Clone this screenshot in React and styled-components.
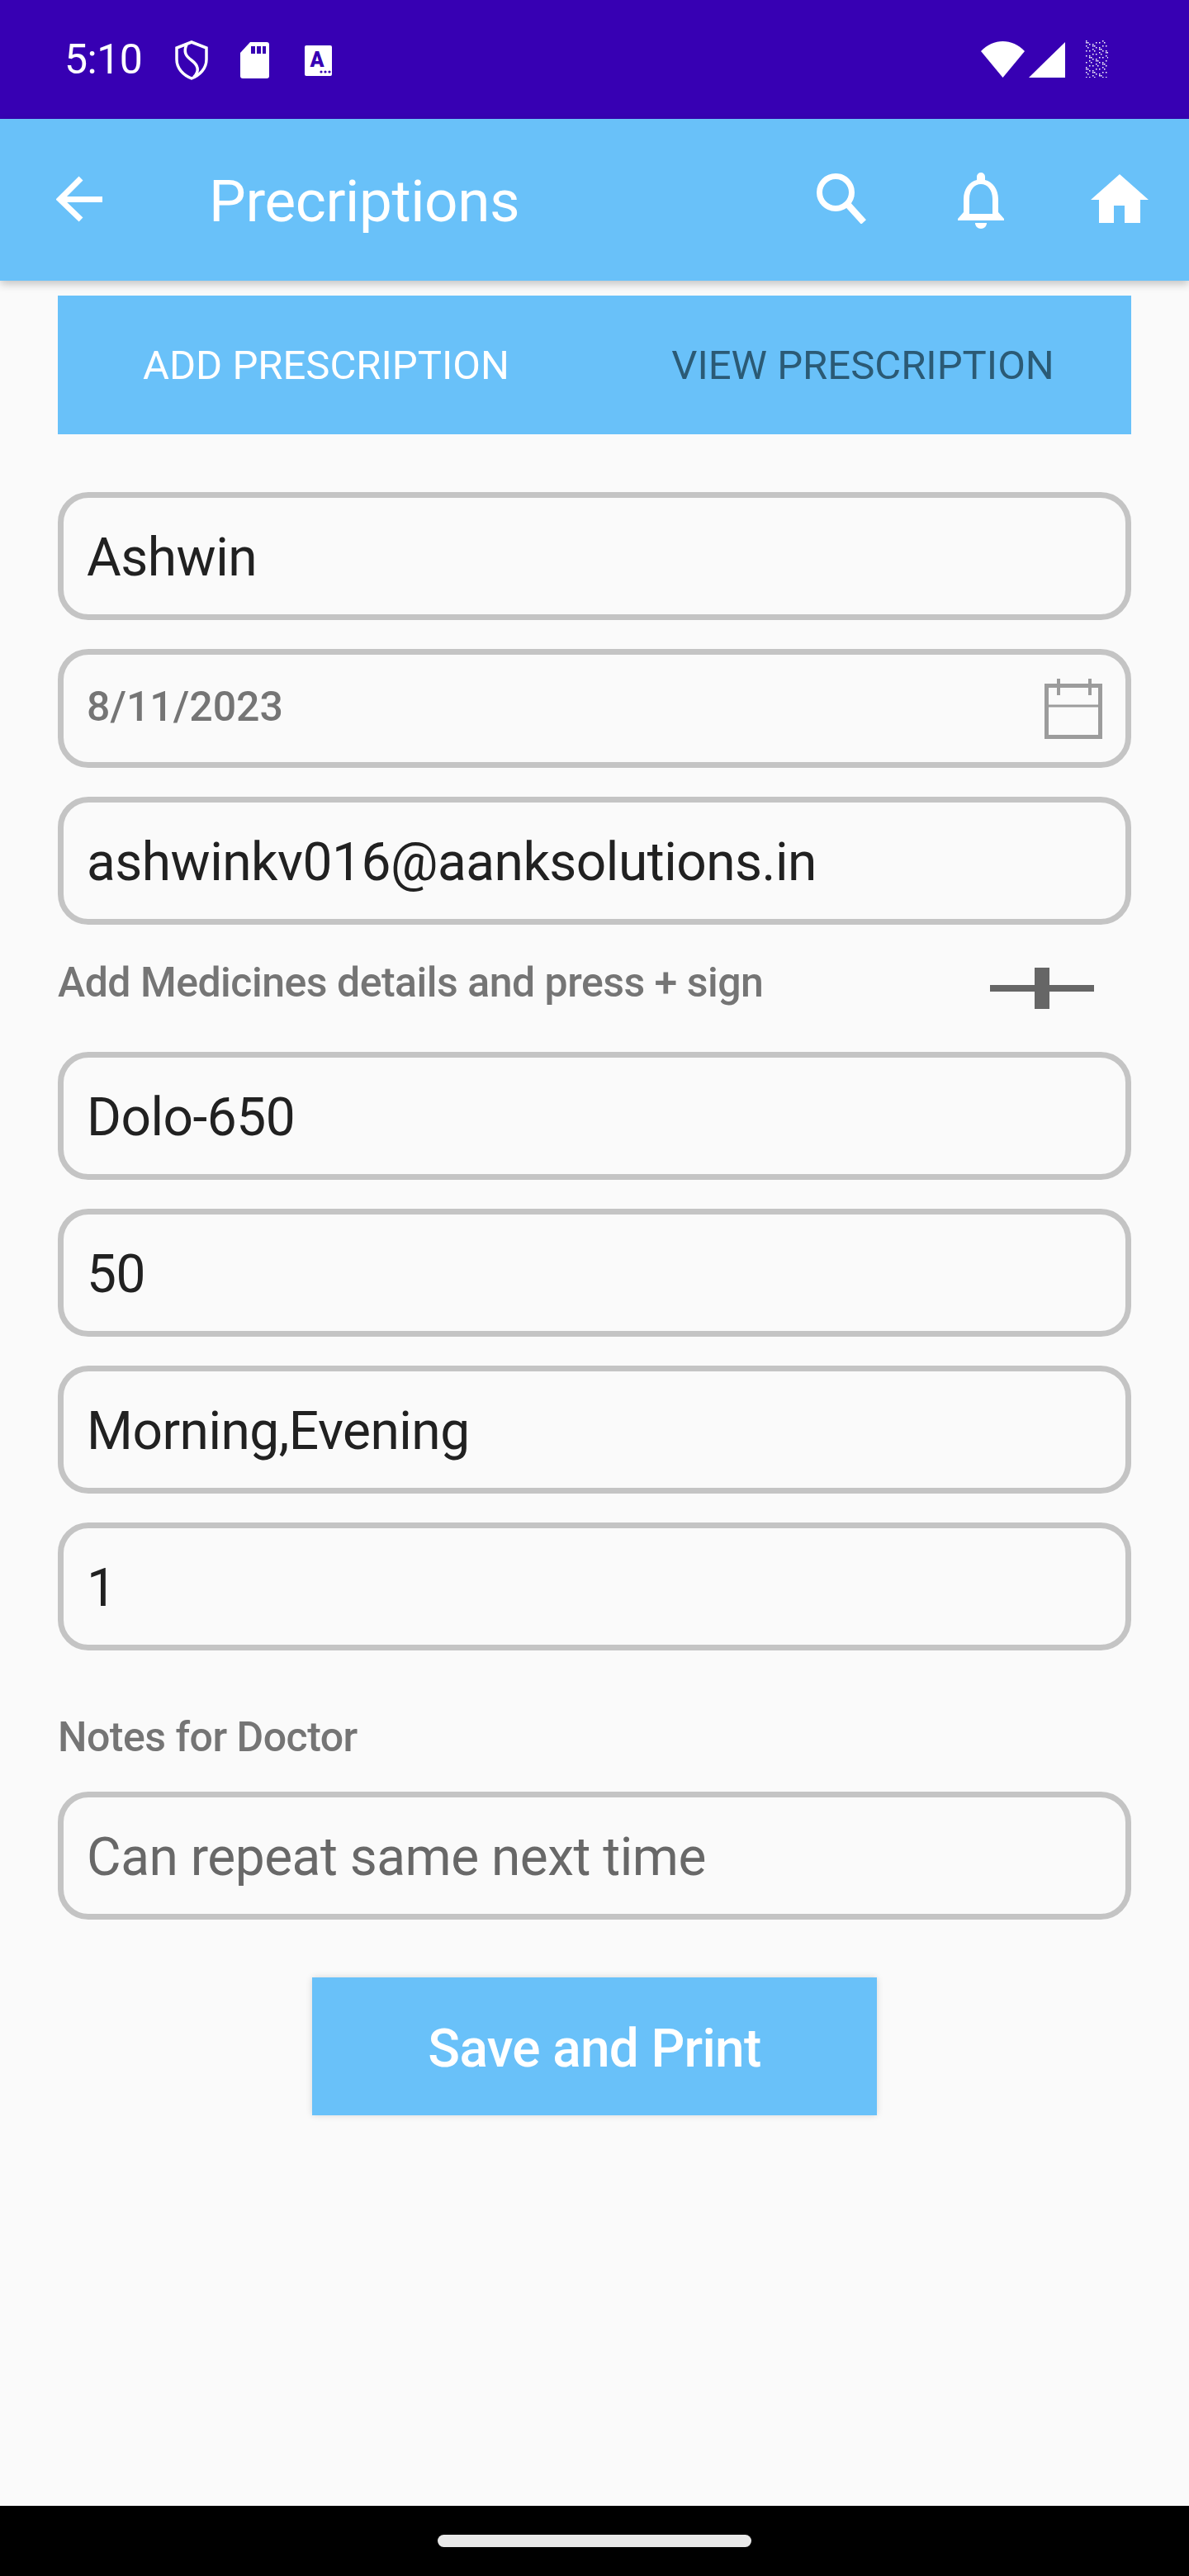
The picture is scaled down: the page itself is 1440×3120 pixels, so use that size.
import styled, { createGlobalStyle } from 'styled-components';

const GlobalStyle = createGlobalStyle`
  html, body {
    margin: 0;
    padding: 0;
    background: #fafafa;
    font-family: Roboto, "Noto Sans", sans-serif;
  }
`;

const Screen = styled.div`
  width: 1440px;
  height: 3120px;
  display: flex;
  flex-direction: column;
  background: #fafafa;
  overflow: hidden;
`;

const StatusBar = styled.div`
  height: 144px;
  flex: none;
  display: flex;
  align-items: flex-start;
  background: #3700b3;
  color: #fff;
`;

const Clock = styled.span`
  margin: 43px 0 0 78px;
  width: 134px;
  font-size: 50px;
  line-height: 58px;
  letter-spacing: -0.5px;
`;

const StatusIcon = styled.svg`
  flex: none;
  display: block;
  margin-top: ${(p) => p.$top}px;
  margin-left: ${(p) => p.$left}px;
`;

const AppBar = styled.header`
  height: 196px;
  flex: none;
  display: flex;
  align-items: flex-start;
  background: #69c1f9;
  box-shadow: 0 4px 10px rgba(0, 0, 0, 0.22);
  color: #fff;
  position: relative;
  z-index: 1;
`;

const BarIcon = styled.svg`
  flex: none;
  display: block;
  margin-top: ${(p) => p.$top}px;
  margin-left: ${(p) => p.$left}px;
`;

const Title = styled.h1`
  margin: 0 0 0 129px;
  width: 736px;
  flex: none;
  font-size: 71px;
  line-height: 100px;
  padding-top: 50px;
  font-weight: 400;
  letter-spacing: -0.4px;
`;

const Main = styled.main`
  flex: 1;
  padding: 18px 70px 0;
  display: flex;
  flex-direction: column;
`;

const Tabs = styled.nav`
  height: 168px;
  flex: none;
  display: grid;
  grid-template-columns: 1fr 1fr;
  background: #69c1f9;
  margin-bottom: 70px;
`;

const Tab = styled.div`
  display: flex;
  align-items: center;
  justify-content: center;
  font-size: 49px;
  color: ${(p) => (p.$active ? '#ffffff' : '#2b5a75')};
`;

const Field = styled.div`
  box-sizing: border-box;
  height: ${(p) => p.$height || 155}px;
  flex: none;
  display: flex;
  align-items: center;
  justify-content: space-between;
  padding: 0 28px;
  margin-bottom: 35px;
  border: 7px solid #c4c4c4;
  border-radius: 37px;
  font-size: ${(p) => p.$size || 64}px;
  letter-spacing: ${(p) => (p.$size ? 0 : -0.5)}px;
  color: ${(p) => p.$color || '#212121'};
  font-weight: ${(p) => p.$weight || 400};
`;

const FieldValue = styled.span`
  margin-top: ${(p) => p.$nudge ?? 4}px;
`;

const CalendarIcon = styled.svg`
  display: block;
`;

const HintRow = styled.div`
  height: 119px;
  flex: none;
  display: flex;
  justify-content: space-between;
  margin-top: -35px;
  margin-bottom: 35px;
`;

const Hint = styled.p`
  margin: 0;
  padding-top: 40px;
  font-size: 50px;
  line-height: 60px;
  font-weight: 500;
  letter-spacing: -0.5px;
  color: #757575;
`;

const PlusButton = styled.svg`
  display: block;
  margin: 52px 45px 0 0;
`;

const NotesLabel = styled(Hint)`
  height: 101px;
  box-sizing: border-box;
  flex: none;
  margin-bottom: 35px;
`;

const SaveButton = styled.button`
  width: 684px;
  height: 167px;
  flex: none;
  align-self: center;
  margin-top: 35px;
  border: 0;
  padding: 5px 0 0;
  background: #69c1f9;
  color: #fff;
  font-family: inherit;
  font-size: 64px;
  font-weight: 500;
  letter-spacing: -0.7px;
  box-shadow: 0 0 8px rgba(0, 0, 0, 0.14);
`;

const NavBar = styled.div`
  height: 85px;
  flex: none;
  display: flex;
  justify-content: center;
  padding-top: 35px;
  box-sizing: border-box;
  background: #000;
`;

const HomePill = styled.div`
  width: 380px;
  height: 15px;
  border-radius: 8px;
  background: #e8e8e8;
`;

// the scrambled notification icon, just speckles
const speckles = () => {
  const dots = [];
  let seed = 17;
  for (let y = 0; y < 45; y += 2) {
    for (let x = 0; x < 27; x += 2) {
      seed = (seed * 137 + 59) % 257;
      if (seed % 5 < 2) dots.push([x, y]);
    }
  }
  return dots;
};

const App = () => (
  <Screen>
    <GlobalStyle />
    <StatusBar>
      <Clock>5:10</Clock>
      <StatusIcon $top={49} $left={0} width="40" height="48" viewBox="0 0 40 48" fill="none" stroke="#fff" strokeWidth="3.5">
        <path d="M20 2 L38 9 V23 C38 34 30 42 20 46 C10 42 2 34 2 23 V9 Z" />
        <path d="M14 5 C10 14 13 19 20 24 C28 30 30 37 23 44" />
      </StatusIcon>
      <StatusIcon $top={51} $left={39} width="35" height="44" viewBox="0 0 35 44">
        <path fill="#fff" d="M12 0 H32 Q35 0 35 3 V41 Q35 44 32 44 H3 Q0 44 0 41 V13 Z" />
        <path fill="#3700b3" d="M13 5 H18 V14 H13 Z M20 5 H25 V14 H20 Z M27 5 H31 V14 H27 Z" />
      </StatusIcon>
      <StatusIcon $top={55} $left={43} width="33" height="37" viewBox="0 0 33 37">
        <rect width="33" height="37" rx="2" fill="#fff" />
        <text x="15" y="26" fontSize="25" fontWeight="900" fontFamily="Roboto, sans-serif" textAnchor="middle" fill="#3700b3">A</text>
        <circle cx="20" cy="32" r="1.6" fill="#3700b3" />
        <circle cx="25" cy="32" r="1.6" fill="#3700b3" />
        <circle cx="30" cy="32" r="1.6" fill="#3700b3" />
      </StatusIcon>
      <StatusIcon $top={50} $left={786} width="53" height="44" viewBox="0 0 53 44">
        <path fill="#fff" d="M26.5 44 L0 12 C15 -4 38 -4 53 12 Z" />
      </StatusIcon>
      <StatusIcon $top={51} $left={5} width="44" height="43" viewBox="0 0 44 43">
        <path fill="#fff" d="M44 0 V43 H0 Z" />
      </StatusIcon>
      <StatusIcon $top={49} $left={25} width="27" height="45" viewBox="0 0 27 45">
        {speckles().map(([x, y]) => (
          <rect key={`${x}-${y}`} x={x} y={y} width="1.5" height="1.5" fill="#fff" />
        ))}
      </StatusIcon>
    </StatusBar>

    <AppBar>
      <BarIcon $top={69} $left={68} width="56" height="56" viewBox="0 0 56 56" fill="none" stroke="#fff" strokeWidth="7">
        <path d="M56 28.5 H6" />
        <path d="M30 3 L4.5 28.5 L30 53" />
      </BarIcon>
      <Title>Precriptions</Title>
      <BarIcon $top={66} $left={0} width="61" height="61" viewBox="0 0 61 61" fill="none" stroke="#fff">
        <circle cx="23" cy="23" r="19.5" strokeWidth="7" />
        <path d="M38 38 L57 59" strokeWidth="8" />
      </BarIcon>
      <BarIcon $top={65} $left={110} width="56" height="68" viewBox="0 0 56 68">
        <path
          fill="#fff"
          fillRule="evenodd"
          d="M28 0 a5 5 0 0 1 5 5 v4 C42 11 49 20 49 32 V48 L56 56 V58 H0 V56 L7 48 V32 C7 20 14 11 23 9 V5 a5 5 0 0 1 5-5Z M14 50 H42 V32 C42 21 36 14 28 14 C20 14 14 21 14 32Z"
        />
        <path fill="#fff" d="M21 61 H35 C35 65 32 68 28 68 C24 68 21 65 21 61Z" />
      </BarIcon>
      <BarIcon $top={67} $left={105} width="70" height="59" viewBox="0 0 70 59">
        <path fill="#fff" d="M35 0 L70 31 H60 V59 H41 V38 H28 V59 H10 V31 H0Z" />
      </BarIcon>
    </AppBar>

    <Main>
      <Tabs>
        <Tab $active>ADD PRESCRIPTION</Tab>
        <Tab>VIEW PRESCRIPTION</Tab>
      </Tabs>

      <Field><FieldValue>Ashwin</FieldValue></Field>
      <Field $height={144} $size={50} $color="#757575" $weight={500}>
        <FieldValue $nudge={-4}>8/11/2023</FieldValue>
        <CalendarIcon width="70" height="73" viewBox="0 0 70 73" fill="none" stroke="#9c9c9c" strokeWidth="5">
          <rect x="2.5" y="8.5" width="65" height="62" />
          <path d="M2 33 H68" strokeWidth="3" />
          <path d="M17 0 V20 M55 0 V20" strokeWidth="4" />
        </CalendarIcon>
      </Field>
      <Field><FieldValue>ashwinkv016@aanksolutions.in</FieldValue></Field>

      <HintRow>
        <Hint>Add Medicines details and press + sign</Hint>
        <PlusButton width="126" height="50" viewBox="0 0 126 50">
          <path fill="#666" d="M0 21 H54 V0 H72 V21 H126 V29 H72 V50 H54 V29 H0 Z" />
        </PlusButton>
      </HintRow>

      <Field><FieldValue>Dolo-650</FieldValue></Field>
      <Field><FieldValue>50</FieldValue></Field>
      <Field><FieldValue>Morning,Evening</FieldValue></Field>
      <Field><FieldValue>1</FieldValue></Field>

      <NotesLabel>Notes for Doctor</NotesLabel>
      <Field $color="#686868"><FieldValue>Can repeat same next time</FieldValue></Field>

      <SaveButton>Save and Print</SaveButton>
    </Main>

    <NavBar>
      <HomePill />
    </NavBar>
  </Screen>
);

export default App;
